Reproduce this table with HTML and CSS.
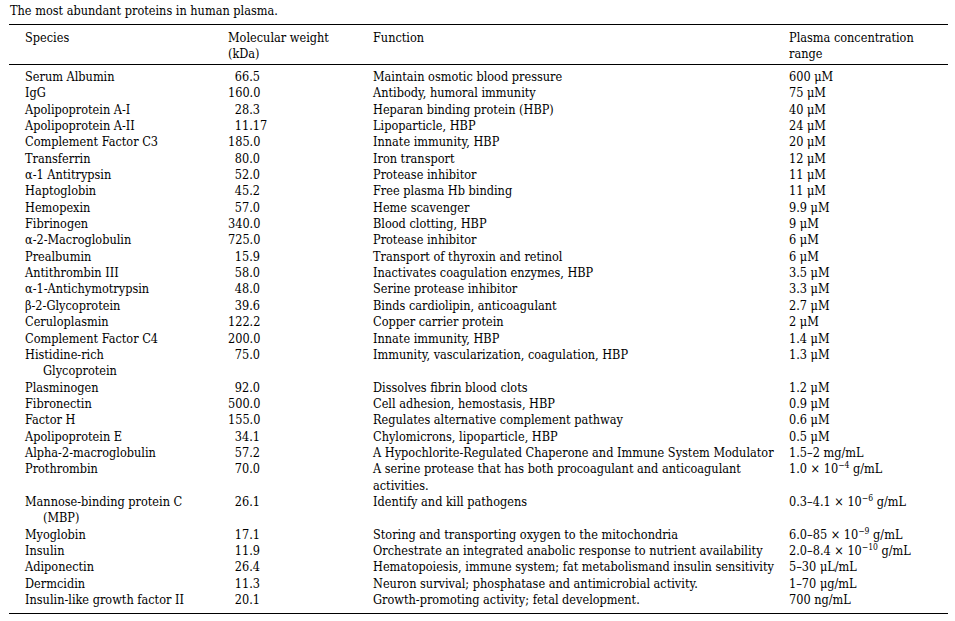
FILE: index.html
```html
<!DOCTYPE html>
<html>
<head>
<meta charset="utf-8">
<link rel="stylesheet" href="styles.css">
</head>
<body>
<div class="page">
  <p class="caption">The most abundant proteins in human plasma.</p>
  <table class="tbl">
    <colgroup>
      <col class="c1"><col class="c2"><col class="c3"><col class="c4">
    </colgroup>
    <thead>
      <tr>
        <th class="sp">Species</th>
        <th>Molecular weight<span class="ln">(kDa)</span></th>
        <th>Function</th>
        <th>Plasma concentration<span class="ln">range</span></th>
      </tr>
    </thead>
    <tbody>
      <tr class="first"><td class="sp">Serum Albumin</td><td><span class="n">66.5</span></td><td>Maintain osmotic blood pressure</td><td>600 μM</td></tr>
      <tr><td class="sp">IgG</td><td><span class="n">160.0</span></td><td>Antibody, humoral immunity</td><td>75 μM</td></tr>
      <tr><td class="sp">Apolipoprotein A-I</td><td><span class="n">28.3</span></td><td>Heparan binding protein (HBP)</td><td>40 μM</td></tr>
      <tr><td class="sp">Apolipoprotein A-II</td><td><span class="n">11.1</span>7</td><td>Lipoparticle, HBP</td><td>24 μM</td></tr>
      <tr><td class="sp">Complement Factor C3</td><td><span class="n">185.0</span></td><td>Innate immunity, HBP</td><td>20 μM</td></tr>
      <tr><td class="sp">Transferrin</td><td><span class="n">80.0</span></td><td>Iron transport</td><td>12 μM</td></tr>
      <tr><td class="sp">α-1 Antitrypsin</td><td><span class="n">52.0</span></td><td>Protease inhibitor</td><td>11 μM</td></tr>
      <tr><td class="sp">Haptoglobin</td><td><span class="n">45.2</span></td><td>Free plasma Hb binding</td><td>11 μM</td></tr>
      <tr><td class="sp">Hemopexin</td><td><span class="n">57.0</span></td><td>Heme scavenger</td><td>9.9 μM</td></tr>
      <tr><td class="sp">Fibrinogen</td><td><span class="n">340.0</span></td><td>Blood clotting, HBP</td><td>9 μM</td></tr>
      <tr><td class="sp">α-2-Macroglobulin</td><td><span class="n">725.0</span></td><td>Protease inhibitor</td><td>6 μM</td></tr>
      <tr><td class="sp">Prealbumin</td><td><span class="n">15.9</span></td><td>Transport of thyroxin and retinol</td><td>6 μM</td></tr>
      <tr><td class="sp">Antithrombin III</td><td><span class="n">58.0</span></td><td>Inactivates coagulation enzymes, HBP</td><td>3.5 μM</td></tr>
      <tr><td class="sp">α-1-Antichymotrypsin</td><td><span class="n">48.0</span></td><td>Serine protease inhibitor</td><td>3.3 μM</td></tr>
      <tr><td class="sp">β-2-Glycoprotein</td><td><span class="n">39.6</span></td><td>Binds cardiolipin, anticoagulant</td><td>2.7 μM</td></tr>
      <tr><td class="sp">Ceruloplasmin</td><td><span class="n">122.2</span></td><td>Copper carrier protein</td><td>2 μM</td></tr>
      <tr><td class="sp">Complement Factor C4</td><td><span class="n">200.0</span></td><td>Innate immunity, HBP</td><td>1.4 μM</td></tr>
      <tr><td class="sp">Histidine-rich<span class="cont">Glycoprotein</span></td><td><span class="n">75.0</span></td><td>Immunity, vascularization, coagulation, HBP</td><td>1.3 μM</td></tr>
      <tr><td class="sp">Plasminogen</td><td><span class="n">92.0</span></td><td>Dissolves fibrin blood clots</td><td>1.2 μM</td></tr>
      <tr><td class="sp">Fibronectin</td><td><span class="n">500.0</span></td><td>Cell adhesion, hemostasis, HBP</td><td>0.9 μM</td></tr>
      <tr><td class="sp">Factor H</td><td><span class="n">155.0</span></td><td>Regulates alternative complement pathway</td><td>0.6 μM</td></tr>
      <tr><td class="sp">Apolipoprotein E</td><td><span class="n">34.1</span></td><td>Chylomicrons, lipoparticle, HBP</td><td>0.5 μM</td></tr>
      <tr><td class="sp">Alpha-2-macroglobulin</td><td><span class="n">57.2</span></td><td>A Hypochlorite-Regulated Chaperone and Immune System Modulator</td><td>1.5–2 mg/mL</td></tr>
      <tr><td class="sp">Prothrombin</td><td><span class="n">70.0</span></td><td>A serine protease that has both procoagulant and anticoagulant<span class="ln">activities.</span></td><td>1.0 × 10<sup>−4</sup> g/mL</td></tr>
      <tr><td class="sp">Mannose-binding protein C<span class="cont">(MBP)</span></td><td><span class="n">26.1</span></td><td>Identify and kill pathogens</td><td>0.3–4.1 × 10<sup>−6</sup> g/mL</td></tr>
      <tr><td class="sp">Myoglobin</td><td><span class="n">17.1</span></td><td>Storing and transporting oxygen to the mitochondria</td><td>6.0–85 × 10<sup>−9</sup> g/mL</td></tr>
      <tr><td class="sp">Insulin</td><td><span class="n">11.9</span></td><td>Orchestrate an integrated anabolic response to nutrient availability</td><td>2.0–8.4 × 10<sup>−10</sup> g/mL</td></tr>
      <tr><td class="sp">Adiponectin</td><td><span class="n">26.4</span></td><td>Hematopoiesis, immune system; fat metabolismand insulin sensitivity</td><td>5–30 μL/mL</td></tr>
      <tr><td class="sp">Dermcidin</td><td><span class="n">11.3</span></td><td>Neuron survival; phosphatase and antimicrobial activity.</td><td>1–70 μg/mL</td></tr>
      <tr class="last"><td class="sp">Insulin-like growth factor II</td><td><span class="n">20.1</span></td><td>Growth-promoting activity; fetal development.</td><td>700 ng/mL</td></tr>
    </tbody>
  </table>
</div>
</body>
</html>
```

FILE: styles.css
```css
html, body {
  margin: 0;
  padding: 0;
  background: #ffffff;
}

body {
  font-family: "DejaVu Serif Condensed", "DejaVu Serif", serif;
  font-stretch: semi-condensed;
  font-size: 12.6px;
  color: #000000;
}

.page {
  padding: 3px 7px 0 9px;
}

.caption {
  margin: 0;
  padding-left: 1px;
  line-height: 16px;
  height: 21px;
}

.tbl {
  width: 939px;
  border-collapse: collapse;
  table-layout: fixed;
  border-top: 1px solid #000;
  border-bottom: 1px solid #000;
}

.c1 { width: 219px; }
.c2 { width: 145px; }
.c3 { width: 416px; }
.c4 { width: 159px; }

.tbl th {
  font-weight: normal;
  text-align: left;
  vertical-align: top;
  padding: 5px 0 2px 0;
  line-height: 16px;
  border-bottom: 1px solid #000;
}

.tbl td {
  vertical-align: top;
  padding: 0;
  line-height: 16.34px;
  white-space: nowrap;
}

.tbl .sp {
  padding-left: 16px;
}

.tbl tr.first td {
  padding-top: 4px;
}

.tbl tr.last td {
  padding-bottom: 5px;
}

.ln {
  display: block;
}

.cont {
  display: block;
  padding-left: 18px;
}

.n {
  display: inline-block;
  width: 32px;
  text-align: right;
}

sup {
  font-size: 8.5px;
  line-height: 0;
  vertical-align: 5px;
}
```
